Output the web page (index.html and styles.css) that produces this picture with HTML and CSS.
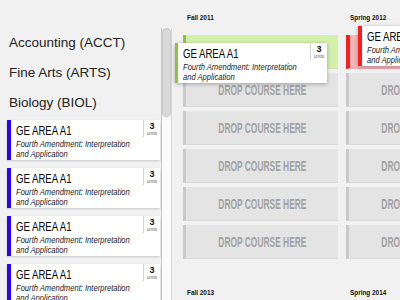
FILE: index.html
```html
<!DOCTYPE html>
<html lang="en">
<head>
  <meta charset="UTF-8">
  <meta name="viewport" content="width=device-width, initial-scale=1.0">
  <title>Course Planner</title>
  <link rel="stylesheet" href="styles.css">
</head>
<body>
  <div class="app">
    <aside class="sidebar">
      <div class="catalog">
        <ul class="subjects">
          <li>Accounting (ACCT)</li>
          <li>Fine Arts (ARTS)</li>
          <li>Biology (BIOL)</li>
        </ul>

        <div class="course">
          <div class="course-info">
            <div class="course-text">
              <div class="course-title">GE AREA A1</div>
              <div class="course-desc">Fourth Amendment: Interpretation<br>and Application</div>
            </div>
          </div>
          <div class="course-units"><b>3</b><small>units</small></div>
        </div>
        <div class="course">
          <div class="course-info">
            <div class="course-text">
              <div class="course-title">GE AREA A1</div>
              <div class="course-desc">Fourth Amendment: Interpretation<br>and Application</div>
            </div>
          </div>
          <div class="course-units"><b>3</b><small>units</small></div>
        </div>
        <div class="course">
          <div class="course-info">
            <div class="course-text">
              <div class="course-title">GE AREA A1</div>
              <div class="course-desc">Fourth Amendment: Interpretation<br>and Application</div>
            </div>
          </div>
          <div class="course-units"><b>3</b><small>units</small></div>
        </div>
        <div class="course">
          <div class="course-info">
            <div class="course-text">
              <div class="course-title">GE AREA A1</div>
              <div class="course-desc">Fourth Amendment: Interpretation<br>and Application</div>
            </div>
          </div>
          <div class="course-units"><b>3</b><small>units</small></div>
        </div>
      </div>
      <div class="scrollbar"><div class="scroll-thumb"></div></div>
    </aside>

    <main class="planner">
      <section class="year">
        <div class="term">
          <h3 class="term-name"><span>Fall 2011</span></h3>
          <div class="slots">
            <div class="slot slot-ok">
              <div class="course course-ok dragging">
                <div class="course-info">
                  <div class="course-text">
                    <div class="course-title">GE AREA A1</div>
                    <div class="course-desc">Fourth Amendment: Interpretation<br>and Application</div>
                  </div>
                </div>
                <div class="course-units"><b>3</b><small>units</small></div>
              </div>
            </div>
            <div class="slot"><span>DROP COURSE HERE</span></div>
            <div class="slot"><span>DROP COURSE HERE</span></div>
            <div class="slot"><span>DROP COURSE HERE</span></div>
            <div class="slot"><span>DROP COURSE HERE</span></div>
            <div class="slot"><span>DROP COURSE HERE</span></div>
          </div>
        </div>

        <div class="term">
          <h3 class="term-name"><span>Spring 2012</span></h3>
          <div class="slots">
            <div class="slot slot-bad">
              <div class="course course-bad dragging dragging-bad">
                <div class="course-info">
                  <div class="course-text">
                    <div class="course-title">GE AREA A1</div>
                    <div class="course-desc">Fourth Amendment: Interpretation<br>and Application</div>
                  </div>
                </div>
                <div class="course-units"><b>3</b><small>units</small></div>
              </div>
            </div>
            <div class="slot"><span>DROP COURSE HERE</span></div>
            <div class="slot"><span>DROP COURSE HERE</span></div>
            <div class="slot"><span>DROP COURSE HERE</span></div>
            <div class="slot"><span>DROP COURSE HERE</span></div>
            <div class="slot"><span>DROP COURSE HERE</span></div>
          </div>
        </div>
      </section>

      <section class="year">
        <div class="term"><h3 class="term-name"><span>Fall 2013</span></h3></div>
        <div class="term"><h3 class="term-name"><span>Spring 2014</span></h3></div>
      </section>
    </main>
  </div>
</body>
</html>
```

FILE: styles.css
```css
body {
  margin: 0;
  background-color: #f0f1f0;
  font-family: 'Liberation Sans', Arial, sans-serif;
  overflow: hidden;
}

.app {
  display: flex;
  height: 300px;
}

/* left catalog */

.sidebar {
  display: flex;
  flex: none;
  width: 172px;
}

.catalog {
  width: 161px;
}

.subjects {
  list-style: none;
  margin: 0;
  padding: 28px 0 2px 9px;
}

.subjects li {
  height: 30px;
  line-height: 30px;
  font-size: 13.5px;
  color: #222;
}

.catalog .course {
  margin: 0 0 8px 7px;
}

.scrollbar {
  width: 11px;
  margin-top: 28px;
  box-sizing: border-box;
  border-left: 1px solid #c6c6c6;
  border-right: 1px solid #d6d6d6;
  background-color: #fbfbfb;
}

.scroll-thumb {
  height: 89px;
  border-radius: 5px;
  background-color: #dadada;
  box-shadow: inset 0 0 0 1px #cbcbcb;
}

/* course card */

.course {
  display: flex;
  width: 153px;
  height: 40px;
  box-sizing: border-box;
  background-color: #fff;
  border-left: 4px solid #2b00ff;
  box-shadow: 0 1px 2px rgba(0, 0, 0, 0.18);
}

.course-info {
  flex: 1;
  min-width: 0;
  padding: 4px 0 0 5px;
}

/* the card text is set in a condensed face, so squeeze regular Arial */
.course-text {
  width: 150px;
  transform: scaleX(0.8);
  transform-origin: 0 0;
}

.course-title {
  font-size: 12px;
  line-height: 14px;
  color: #000;
}

.course-desc {
  margin-top: 0.5px;
  font-style: italic;
  font-size: 9.5px;
  line-height: 10px;
  color: #222;
}

.course-units {
  flex: none;
  width: 16px;
  height: 17px;
  border-left: 1px solid #d4d4d4;
  text-align: center;
}

.course-units b {
  display: block;
  margin-top: 2px;
  font-size: 9px;
  line-height: 9px;
  color: #111;
}

.course-units small {
  display: block;
  font-size: 5px;
  line-height: 5px;
  color: #666;
}

/* planner */

.planner {
  flex: 1;
  padding: 12px 0 0 11px;
}

.year {
  display: grid;
  grid-template-columns: 155px 155px;
  gap: 8px;
  margin-bottom: 28px;
}

.term-name {
  margin: 0;
  height: 23px;
  padding-left: 4px;
  font-size: 8px;
  line-height: 12px;
  font-weight: bold;
  color: #111;
  white-space: nowrap;
}

.term-name span {
  display: inline-block;
  transform: scaleX(0.8);
  transform-origin: 0 0;
}

.slots {
  display: flex;
  flex-direction: column;
  gap: 4px;
}

.slot {
  position: relative;
  display: flex;
  align-items: center;
  justify-content: center;
  height: 34px;
  box-sizing: border-box;
  background-color: #e4e4e4;
  border-left: 3px solid #c9c9c9;
  border-bottom: 1px solid #d9d9d9;
}

.slot span {
  display: inline-block;
  font-weight: bold;
  font-size: 14px;
  color: #a2a2a2;
  white-space: nowrap;
  transform: scaleX(0.6);
}

.slot-ok {
  background-color: #d4f1aa;
  border-left-color: #8cc63f;
  border-bottom-color: #c6e69a;
}

.slot-bad {
  background-color: #f5b8b8;
  border-left: 4px solid #ff1c1c;
  border-bottom-color: #eeaaaa;
}

/* cards being dragged over a slot */

.dragging {
  position: absolute;
  z-index: 2;
  top: 8px;
  left: -11px;
  width: 152px;
  box-shadow: 0 1px 4px rgba(0, 0, 0, 0.3);
}

.course-ok {
  border-left: 3px solid #8cc63f;
}

.course-bad {
  border-left: 4px solid #ff1c1c;
}

.dragging-bad {
  top: -9px;
  left: 8px;
}
```
